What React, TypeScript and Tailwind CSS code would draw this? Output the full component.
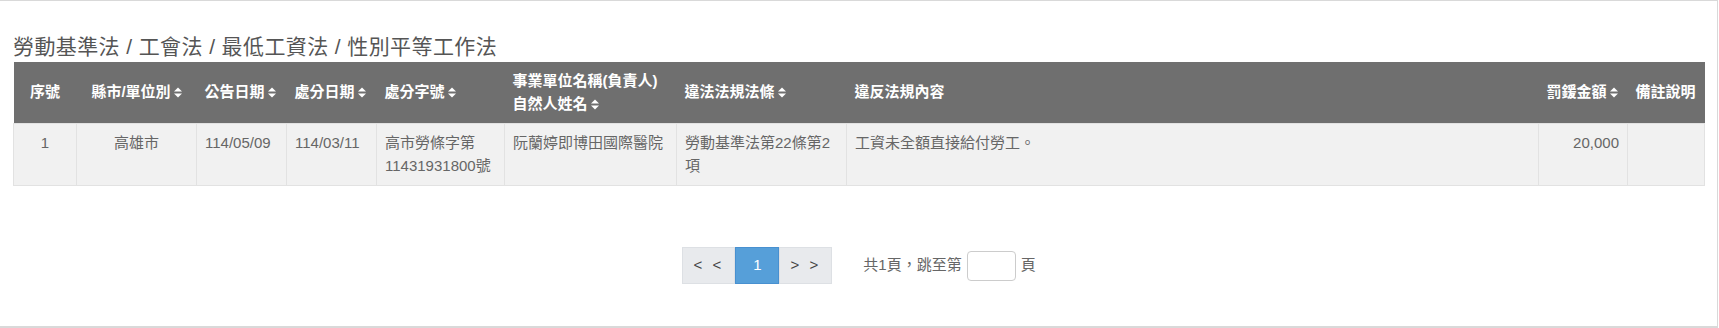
import React from "react";

const font = { fontFamily: '"Liberation Sans", "Noto Sans CJK TC", sans-serif' };

function SortIcon() {
  return (
    <svg
      width="8"
      height="11"
      viewBox="0 0 8 11"
      fill="currentColor"
      className="inline-block ml-[3px] align-[-1px]"
    >
      <path d="M0 4.6 L4 0.6 L8 4.6 Z M0 6.4 L4 10.4 L8 6.4 Z" />
    </svg>
  );
}

const rows = [
  {
    no: "1",
    city: "高雄市",
    announce: "114/05/09",
    punish: "114/03/11",
    docNo: ["高市勞條字第", "11431931800號"],
    company: "阮蘭婷即博田國際醫院",
    law: "勞動基準法第22條第2項",
    content: "工資未全額直接給付勞工。",
    fine: "20,000",
    note: "",
  },
];

export default function App() {
  return (
    <div style={font} className="w-[1719px] h-[328px] bg-white">
      <div className="w-[1718px] h-[328px] bg-white border-t border-r border-b-2 border-[#d9d9d9] pt-[31px] pl-[13px] pr-[12px]">
        <h2 className="text-[21px] leading-[30px] text-[#555] tracking-[0.4px]">
          勞動基準法 / 工會法 / 最低工資法 / 性別平等工作法
        </h2>

        <table className="w-full table-fixed border-collapse text-[15px] leading-[1.5]">
          <thead>
            <tr className="bg-[#6f6f6f] text-white font-bold">
              <th className="w-[63px] px-2 py-2 text-center align-middle">序號</th>
              <th className="w-[120px] px-2 py-2 text-center align-middle whitespace-nowrap">
                縣市/單位別
                <SortIcon />
              </th>
              <th className="w-[90px] px-2 py-2 text-left align-middle whitespace-nowrap">
                公告日期
                <SortIcon />
              </th>
              <th className="w-[90px] px-2 py-2 text-left align-middle whitespace-nowrap">
                處分日期
                <SortIcon />
              </th>
              <th className="w-[128px] px-2 py-2 text-left align-middle whitespace-nowrap">
                處分字號
                <SortIcon />
              </th>
              <th className="w-[172px] px-2 py-2 text-left align-middle whitespace-nowrap">
                事業單位名稱(負責人)
                <br />
                自然人姓名
                <SortIcon />
              </th>
              <th className="w-[170px] px-2 py-2 text-left align-middle whitespace-nowrap">
                違法法規法條
                <SortIcon />
              </th>
              <th className="px-2 py-2 text-left align-middle">違反法規內容</th>
              <th className="w-[89px] px-2 py-2 text-left align-middle whitespace-nowrap">
                罰鍰金額
                <SortIcon />
              </th>
              <th className="w-[77px] px-2 py-2 text-left align-middle whitespace-nowrap">
                備註說明
              </th>
            </tr>
          </thead>
          <tbody>
            {rows.map((r) => (
              <tr key={r.no} className="bg-[#f1f1f1] text-[#666]">
                <td className="border border-[#e2e2e2] px-2 py-2 align-top text-center">{r.no}</td>
                <td className="border border-[#e2e2e2] px-2 py-2 align-top text-center">{r.city}</td>
                <td className="border border-[#e2e2e2] px-2 py-2 align-top whitespace-nowrap">{r.announce}</td>
                <td className="border border-[#e2e2e2] px-2 py-2 align-top whitespace-nowrap">{r.punish}</td>
                <td className="border border-[#e2e2e2] px-2 py-2 align-top">
                  {r.docNo[0]}
                  <br />
                  {r.docNo[1]}
                </td>
                <td className="border border-[#e2e2e2] px-2 py-2 align-top whitespace-nowrap">{r.company}</td>
                <td className="border border-[#e2e2e2] px-2 py-2 align-top">{r.law}</td>
                <td className="border border-[#e2e2e2] px-2 py-2 align-top">{r.content}</td>
                <td className="border border-[#e2e2e2] px-2 py-2 align-top text-right">{r.fine}</td>
                <td className="border border-[#e2e2e2] px-2 py-2 align-top">{r.note}</td>
              </tr>
            ))}
          </tbody>
        </table>

        <div className="mt-[61px] flex items-center justify-center text-[15px]">
          <div className="flex">
            <button className="w-[53px] h-[37px] bg-[#e8eaed] border border-[#dde0e4] text-[#444] tracking-[3px]">
              &lt; &lt;
            </button>
            <button className="w-[44px] h-[37px] bg-[#569fd9] border border-[#4890d0] text-white">
              1
            </button>
            <button className="w-[53px] h-[37px] bg-[#e8eaed] border border-[#dde0e4] text-[#444] tracking-[3px]">
              &gt; &gt;
            </button>
          </div>
          <div className="ml-[31px] flex items-center text-[#666]">
            <span>共1頁，跳至第</span>
            <input className="ml-[5px] w-[49px] h-[30px] border border-[#ccc] rounded-[4px] bg-white" />
            <span className="ml-[5px]">頁</span>
          </div>
        </div>
      </div>
    </div>
  );
}
